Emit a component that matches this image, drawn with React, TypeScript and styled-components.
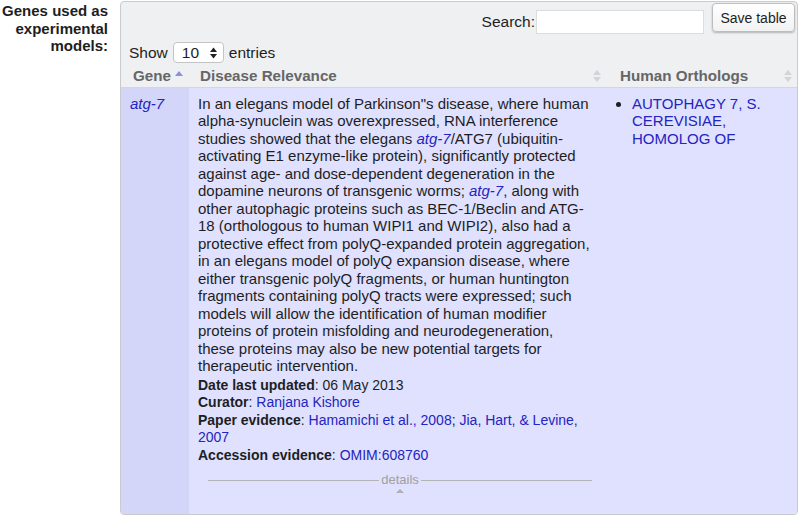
import styled, { createGlobalStyle } from "styled-components";

const GlobalStyle = createGlobalStyle`
  body {
    margin: 0;
    background: #ffffff;
    font-family: "Liberation Sans", Arial, Helvetica, sans-serif;
    color: #1e1e1e;
  }
`;

const colors = {
  panel: "#eef0f2",
  panelBorder: "#c9cbcd",
  row: "#dfe1fe",
  geneCol: "#d3d5f9",
  link: "#2424c0",
  header: "#666666",
  sortIdle: "#d2d4d8",
  sortActive: "#8c8ee0",
};

const Page = styled.div`
  display: flex;
  align-items: flex-start;
  padding-top: 1px;
`;

const FieldLabel = styled.div`
  flex-shrink: 0;
  width: 108px;
  padding-top: 1px;
  text-align: right;
  font-size: 15px;
  font-weight: bold;
  line-height: 17.5px;
`;

const Panel = styled.div`
  margin-left: 12px;
  width: 676px;
  height: 512px;
  border: 1px solid ${colors.panelBorder};
  border-radius: 4px;
  background: ${colors.panel};
  display: flex;
  flex-direction: column;
  overflow: hidden;
`;

const Toolbar = styled.div`
  display: flex;
  justify-content: flex-end;
  align-items: flex-start;
  gap: 8px;
  padding: 1px 2px 0 0;
`;

const SearchLabel = styled.label`
  display: flex;
  align-items: center;
  margin-top: 7px;
  font-size: 15.5px;
`;

const SearchInput = styled.input`
  width: 168px;
  height: 24px;
  margin-left: 1px;
  box-sizing: border-box;
  border: 1px solid #dcdcdc;
  background: #ffffff;
`;

const SaveButton = styled.button`
  width: 83px;
  height: 29px;
  border: 1px solid #bdbdbd;
  border-radius: 4px;
  background: linear-gradient(#ffffff, #f2f2f2);
  box-shadow: 0 1px 2px rgba(0, 0, 0, 0.25);
  font-family: inherit;
  font-size: 14px;
  color: #1e1e1e;
  padding: 0;
`;

const ShowRow = styled.div`
  display: flex;
  align-items: center;
  gap: 5px;
  padding-left: 8px;
  margin-top: 8px;
  font-size: 15.5px;
`;

const Select = styled.div`
  display: flex;
  align-items: center;
  justify-content: space-between;
  width: 51px;
  height: 21px;
  box-sizing: border-box;
  padding: 0 6px 0 8px;
  border: 1px solid #c4c4c4;
  border-radius: 4px;
  background: #ffffff;
  font-size: 15.5px;
`;

const Table = styled.table`
  width: 100%;
  margin-top: 2px;
  border-collapse: collapse;
  table-layout: fixed;
  flex: 1;
`;

const Th = styled.th<{ $w?: number; $pl: number; $pr: number }>`
  box-sizing: border-box;
  width: ${(p) => (p.$w ? `${p.$w}px` : "auto")};
  height: 22px;
  padding: 0 ${(p) => p.$pr}px 0 ${(p) => p.$pl}px;
  border-bottom: 1px solid #d4d6da;
  text-align: left;
  font-size: 15.2px;
  font-weight: bold;
  color: ${colors.header};
`;

const HeadInner = styled.div`
  display: flex;
  align-items: center;
  justify-content: space-between;
`;

const Td = styled.td<{ $bg: string; $pr?: number }>`
  box-sizing: border-box;
  vertical-align: top;
  padding: 7px ${(p) => p.$pr ?? 9}px 0 9px;
  background: ${(p) => p.$bg};
  font-size: 15px;
  line-height: 17.5px;
`;

const GeneLink = styled.a`
  color: ${colors.link};
  font-style: italic;
  text-decoration: none;
`;

const Link = styled.a`
  color: ${colors.link};
  text-decoration: none;
`;

const Para = styled.p`
  margin: 0;
`;

const Fields = styled.div`
  margin-top: 2px;
`;

const Field = styled.div`
  font-size: 14px;
  line-height: 17.5px;
  b {
    font-weight: bold;
  }
`;

const Details = styled.div`
  display: flex;
  flex-direction: column;
  align-items: center;
  margin: 9px 1px 0 10px;
  color: #a0a0a0;
  font-size: 13px;
  line-height: 14px;
`;

const DetailsLine = styled.div`
  display: flex;
  align-items: center;
  width: 100%;
  gap: 2px;
  &::before,
  &::after {
    content: "";
    flex: 1;
    height: 1px;
    background: #b4b4b4;
  }
`;

const OrthoList = styled.ul`
  margin: 0;
  padding-left: 12px;
`;

function SortIcon({ active }: { active?: boolean }) {
  if (active) {
    return (
      <svg width="8" height="12" viewBox="0 0 8 12">
        <path d="M0 6 L4 1 L8 6 Z" fill={colors.sortActive} />
      </svg>
    );
  }
  return (
    <svg width="8" height="14" viewBox="0 0 8 14">
      <path d="M0 6 L4 1 L8 6 Z" fill={colors.sortIdle} />
      <path d="M0 8 L4 13 L8 8 Z" fill={colors.sortIdle} />
    </svg>
  );
}

function SelectArrows() {
  return (
    <svg width="7" height="12" viewBox="0 0 7 12">
      <path d="M0 5 L3.5 0.5 L7 5 Z" fill="#222" />
      <path d="M0 7 L3.5 11.5 L7 7 Z" fill="#222" />
    </svg>
  );
}

export default function App() {
  return (
    <>
      <GlobalStyle />
      <Page>
        <FieldLabel>Genes used as experimental models:</FieldLabel>
        <Panel>
          <Toolbar>
            <SearchLabel>
              Search:
              <SearchInput type="text" />
            </SearchLabel>
            <SaveButton>Save table</SaveButton>
          </Toolbar>
          <ShowRow>
            Show
            <Select>
              10
              <SelectArrows />
            </Select>
            entries
          </ShowRow>
          <Table>
            <thead>
              <tr>
                <Th $w={68} $pl={12} $pr={6}>
                  <HeadInner>
                    Gene
                    <SortIcon active />
                  </HeadInner>
                </Th>
                <Th $w={422} $pl={11} $pr={10}>
                  <HeadInner>
                    Disease Relevance
                    <SortIcon />
                  </HeadInner>
                </Th>
                <Th $pl={9} $pr={5}>
                  <HeadInner>
                    Human Orthologs
                    <SortIcon />
                  </HeadInner>
                </Th>
              </tr>
            </thead>
            <tbody>
              <tr>
                <Td $bg={colors.geneCol}>
                  <GeneLink>atg-7</GeneLink>
                </Td>
                <Td $bg={colors.row} $pr={18}>
                  <Para>
                    In an elegans model of Parkinson"s disease, where human
                    alpha-synuclein was overexpressed, RNA interference studies
                    showed that the elegans <GeneLink>atg-7</GeneLink>/ATG7
                    (ubiquitin-activating E1 enzyme-like protein), significantly
                    protected against age- and dose-dependent degeneration in
                    the dopamine neurons of transgenic worms;{" "}
                    <GeneLink>atg-7</GeneLink>, along with other autophagic
                    proteins such as BEC-1/Beclin and ATG-18 (orthologous to
                    human WIPI1 and WIPI2), also had a protective effect from
                    polyQ-expanded protein aggregation, in an elegans model of
                    polyQ expansion disease, where either transgenic polyQ
                    fragments, or human huntington fragments containing polyQ
                    tracts were expressed; such models will allow the
                    identification of human modifier proteins of protein
                    misfolding and neurodegeneration, these proteins may also be
                    new potential targets for therapeutic intervention.
                  </Para>
                  <Fields>
                    <Field>
                      <b>Date last updated</b>: 06 May 2013
                    </Field>
                    <Field>
                      <b>Curator</b>: <Link>Ranjana Kishore</Link>
                    </Field>
                    <Field>
                      <b>Paper evidence</b>:{" "}
                      <Link>Hamamichi et al., 2008</Link>;{" "}
                      <Link>Jia, Hart, &amp; Levine, 2007</Link>
                    </Field>
                    <Field>
                      <b>Accession evidence</b>: <Link>OMIM:608760</Link>
                    </Field>
                  </Fields>
                  <Details>
                    <DetailsLine>details</DetailsLine>
                    <svg width="8" height="8" viewBox="0 0 8 8">
                      <path d="M0 6 L4 2 L8 6 Z" fill="#b0b0b0" />
                    </svg>
                  </Details>
                </Td>
                <Td $bg={colors.row}>
                  <OrthoList>
                    <li>
                      <Link>AUTOPHAGY 7, S. CEREVISIAE, HOMOLOG OF</Link>
                    </li>
                  </OrthoList>
                </Td>
              </tr>
            </tbody>
          </Table>
        </Panel>
      </Page>
    </>
  );
}
